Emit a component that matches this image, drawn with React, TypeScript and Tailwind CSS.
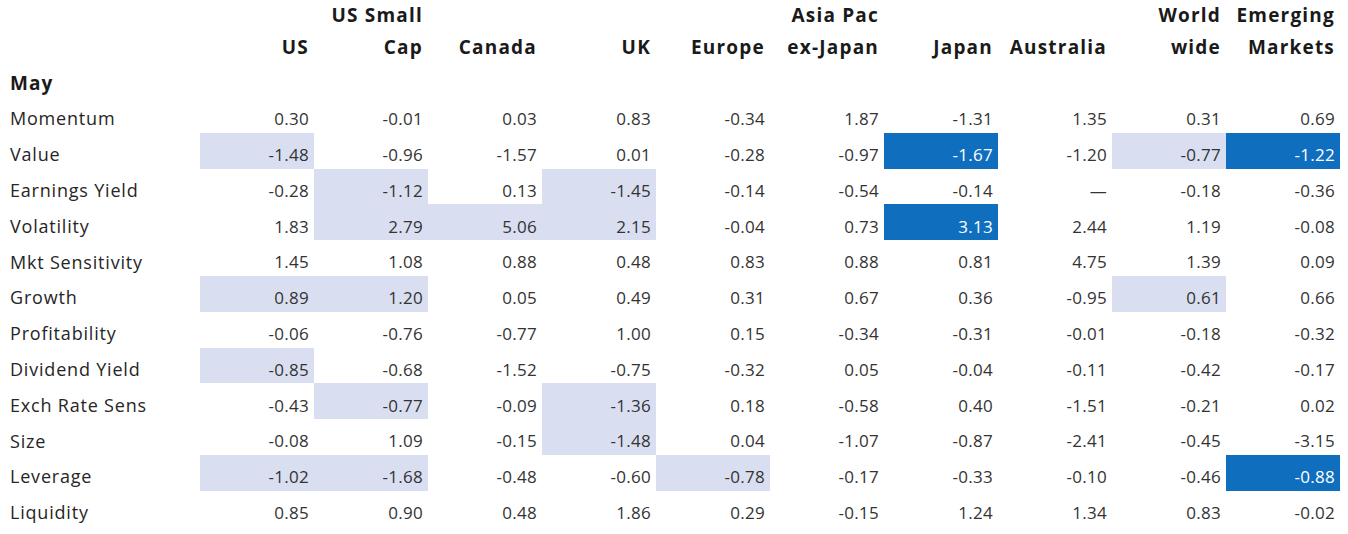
import React from 'react'

const columns: [string, string][] = [
  ['', 'US'],
  ['US Small', 'Cap'],
  ['', 'Canada'],
  ['', 'UK'],
  ['', 'Europe'],
  ['Asia Pac', 'ex-Japan'],
  ['', 'Japan'],
  ['', 'Australia'],
  ['World', 'wide'],
  ['Emerging', 'Markets'],
]

// highlight: . none, l light, d dark
const rows: { label: string; values: string[]; hl: string }[] = [
  { label: 'Momentum', values: ['0.30', '-0.01', '0.03', '0.83', '-0.34', '1.87', '-1.31', '1.35', '0.31', '0.69'], hl: '..........' },
  { label: 'Value', values: ['-1.48', '-0.96', '-1.57', '0.01', '-0.28', '-0.97', '-1.67', '-1.20', '-0.77', '-1.22'], hl: 'l.....d.ld' },
  { label: 'Earnings Yield', values: ['-0.28', '-1.12', '0.13', '-1.45', '-0.14', '-0.54', '-0.14', '—', '-0.18', '-0.36'], hl: '.l.l......' },
  { label: 'Volatility', values: ['1.83', '2.79', '5.06', '2.15', '-0.04', '0.73', '3.13', '2.44', '1.19', '-0.08'], hl: '.lll..d...' },
  { label: 'Mkt Sensitivity', values: ['1.45', '1.08', '0.88', '0.48', '0.83', '0.88', '0.81', '4.75', '1.39', '0.09'], hl: '..........' },
  { label: 'Growth', values: ['0.89', '1.20', '0.05', '0.49', '0.31', '0.67', '0.36', '-0.95', '0.61', '0.66'], hl: 'll......l.' },
  { label: 'Profitability', values: ['-0.06', '-0.76', '-0.77', '1.00', '0.15', '-0.34', '-0.31', '-0.01', '-0.18', '-0.32'], hl: '..........' },
  { label: 'Dividend Yield', values: ['-0.85', '-0.68', '-1.52', '-0.75', '-0.32', '0.05', '-0.04', '-0.11', '-0.42', '-0.17'], hl: 'l.........' },
  { label: 'Exch Rate Sens', values: ['-0.43', '-0.77', '-0.09', '-1.36', '0.18', '-0.58', '0.40', '-1.51', '-0.21', '0.02'], hl: '.l.l......' },
  { label: 'Size', values: ['-0.08', '1.09', '-0.15', '-1.48', '0.04', '-1.07', '-0.87', '-2.41', '-0.45', '-3.15'], hl: '...l......' },
  { label: 'Leverage', values: ['-1.02', '-1.68', '-0.48', '-0.60', '-0.78', '-0.17', '-0.33', '-0.10', '-0.46', '-0.88'], hl: 'll..l....d' },
  { label: 'Liquidity', values: ['0.85', '0.90', '0.48', '1.86', '0.29', '-0.15', '1.24', '1.34', '0.83', '-0.02'], hl: '..........' },
]

function cellClass(h: string) {
  if (h === 'd') return 'bg-[#106ebe] text-white'
  if (h === 'l') return 'bg-[#d9dff1] text-[#333]'
  return 'text-[#333]'
}

export default function App() {
  return (
    <div className="w-[1348px] h-[534px] bg-white font-['Open_Sans',sans-serif] overflow-hidden">
      <div className="grid grid-cols-[200px_repeat(10,114px)]">
        {/* header */}
        <div className="h-[63px]" />
        {columns.map(([top, bottom], i) => (
          <div key={i} className="h-[63px] flex flex-col justify-end items-end pr-[5px] text-[19px] font-bold text-[#1a1a1a] leading-[32px] tracking-[1.2px]">
            <span>{top}</span>
            <span>{bottom}</span>
          </div>
        ))}
        <div className="h-[34px] pt-[6px] pl-[10px] flex items-center text-[19px] font-bold text-[#1a1a1a] tracking-[1px]">May</div>
        {columns.map((_, i) => <div key={i} className="h-[34px]" />)}
        {rows.map((row) => (
          <React.Fragment key={row.label}>
            <div className="h-[35.8px] pt-[8px] pl-[10px] flex items-center text-[18px] tracking-[0.8px] text-[#262626]">{row.label}</div>
            {row.values.map((v, j) => (
              <div key={j} className={`h-[35.8px] pt-[8px] flex items-center justify-end pr-[5px] text-[17px] tracking-[0.3px] ${cellClass(row.hl[j])}`}>
                {v}
              </div>
            ))}
          </React.Fragment>
        ))}
      </div>
    </div>
  )
}
